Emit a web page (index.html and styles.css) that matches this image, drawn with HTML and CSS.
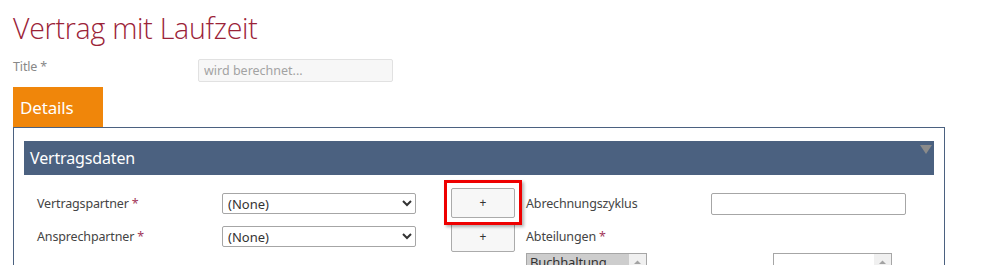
FILE: index.html
```html
<!DOCTYPE html>
<html lang='de'>
<head>
  <meta charset='UTF-8'>
  <title>Vertrag mit Laufzeit</title>
  <link rel="stylesheet" href="styles.css">
</head>
<body>
  <h1 class='page-title'>Vertrag mit Laufzeit</h1>
  <div class='title-row'>
    <label class='title-label'>Title <span>*</span></label>
    <input class='title-input' type='text' placeholder='wird berechnet...' disabled>
  </div>
  <div class='tab'>Details</div>
  <div class='panel'>
    <div class='section-head'>
      <span>Vertragsdaten</span>
      <svg class='collapse' width='12' height='9' viewBox='0 0 12 9'><polygon points='0,0 12,0 6,9' fill='#8a8a8a'/></svg>
    </div>
    <div class='form-grid'>
      <label class='lbl'>Vertragspartner <span class='req'>*</span></label>
      <select class='sel'><option>(None)</option></select>
      <div class='add-cell'><button class='add-btn marked'>+</button></div>
      <label class='lbl'>Abrechnungszyklus</label>
      <input class='txt' type='text'>

      <label class='lbl'>Ansprechpartner <span class='req'>*</span></label>
      <select class='sel'><option>(None)</option></select>
      <div class='add-cell'><button class='add-btn'>+</button></div>
      <label class='lbl'>Abteilungen <span class='req'>*</span></label>
      <div></div>

      <div></div>
      <select class='sel low'><option></option></select>
      <div></div>
      <div class='picker'>
        <div class='list'>
          <div class='opts'>
            <div class='opt selected'>Buchhaltung</div>
            <div class='opt'>Einkauf</div>
            <div class='opt'>Geschäftsführung</div>
            <div class='opt'>IT</div>
          </div>
          <div class='scroll'>
            <svg width='17' height='17' viewBox='0 0 17 17'><polygon points='5,10 12,10 8.5,6.5' fill='#a3a3a3'/></svg>
          </div>
        </div>
        <div class='list right'>
          <div class='opts'></div>
          <div class='scroll'>
            <svg width='17' height='17' viewBox='0 0 17 17'><polygon points='5,10 12,10 8.5,6.5' fill='#a3a3a3'/></svg>
          </div>
        </div>
      </div>
    </div>
  </div>
</body>
</html>
```
FILE: styles.css
```css
body {
  margin: 0;
  padding: 0 13px;
  background: #fff;
  font-family: "Noto Sans", "Open Sans", sans-serif;
  font-size: 12.5px;
  letter-spacing: -0.15px;
  color: #444;
  height: 265px;
  overflow: hidden;
}

.page-title {
  margin: 0;
  padding-top: 8px;
  height: 46px;
  font-family: "Open Sans", sans-serif;
  font-weight: 300;
  font-size: 28.5px;
  line-height: 40px;
  color: #9b2338;
  letter-spacing: -0.25px;
}

.title-row {
  display: flex;
  align-items: center;
  height: 33px;
}

.title-label {
  width: 185px;
  color: #888;
  margin-top: -8px;
}

.title-input {
  width: 195px;
  height: 23px;
  box-sizing: border-box;
  border: 1px solid #e1e1e1;
  border-radius: 2px;
  background: #f7f7f7;
  padding: 0 5px;
  font: inherit;
}

.title-input::placeholder {
  color: #a3a3a3;
}

.tab {
  width: 90px;
  height: 40px;
  box-sizing: border-box;
  background: #f0860a;
  color: #fff;
  font-size: 17px;
  padding: 9px 0 0 7px;
}

.panel {
  border: 1px solid #4b6180;
  width: 932px;
  box-sizing: border-box;
  padding: 13px 10px 0 10px;
  height: 200px;
}

.section-head {
  position: relative;
  background: #4b6180;
  height: 34px;
  color: #fff;
  font-size: 16px;
  line-height: 34px;
  padding-left: 6px;
}

.collapse {
  position: absolute;
  right: 2px;
  top: 4px;
}

.form-grid {
  display: grid;
  grid-template-columns: 185px 229px 75px 185px 1fr;
  grid-auto-rows: 33px;
  padding: 12px 0 0 13px;
  align-items: center;
}

.lbl {
  color: #444;
  margin-top: -1px;
}

.req {
  color: #a2375a;
}

.sel {
  width: 194px;
  height: 21px;
  border: 1px solid #a6a6a6;
  border-radius: 2px;
  background: #fff;
  font: inherit;
  font-size: 13px;
  color: #333;
  padding: 0 1px;
}

.sel.low {
  align-self: end;
  margin-bottom: -6px;
}

.add-cell {
  position: relative;
}

.add-btn {
  width: 64px;
  height: 30px;
  border: 1px solid #ababab;
  border-radius: 2px;
  background: #f7f7f7;
  font: inherit;
  font-size: 12px;
  color: #333;
  padding: 0;
  display: block;
}

.add-btn.marked {
  position: relative;
  z-index: 1;
  margin-top: -2px;
}

/* red highlight frame around the first add button */
.add-btn.marked::after {
  content: '';
  position: absolute;
  left: -8px;
  top: -9px;
  right: -8px;
  bottom: -8px;
  border: 3px solid #ee0000;
  box-shadow: 2px 2px 3px rgba(0, 0, 0, 0.3);
}

.txt {
  width: 195px;
  height: 22px;
  box-sizing: border-box;
  border: 1px solid #a6a6a6;
  border-radius: 2px;
}

.picker {
  grid-column: 4 / span 2;
  display: flex;
  gap: 126px;
  align-self: start;
}

.list {
  display: flex;
  width: 121px;
  height: 70px;
  box-sizing: border-box;
  border: 1px solid #a6a6a6;
  font-size: 13px;
  color: #333;
}

.list.right {
  width: 119px;
}

.opts {
  flex: 1;
  min-width: 0;
}

.scroll {
  width: 17px;
  background: #f0f0f0;
}

.scroll svg {
  display: block;
}

.opt {
  padding: 0 3px;
  line-height: 17px;
  white-space: nowrap;
}

.opt.selected {
  background: #cdcdcd;
}
```
